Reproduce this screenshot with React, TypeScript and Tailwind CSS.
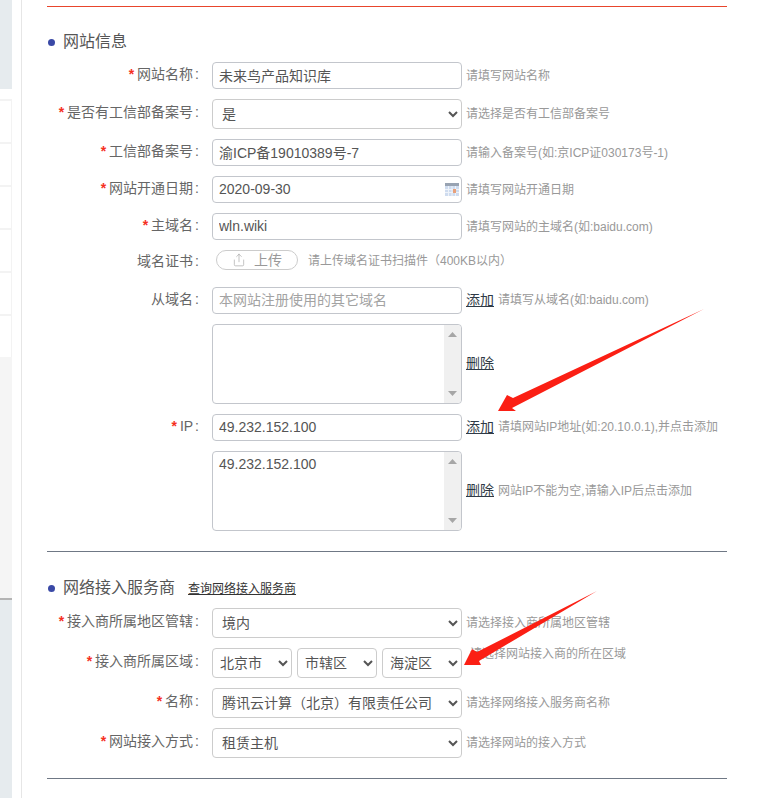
import React, { FC, ReactNode } from 'react'
import { Share } from 'lucide-react'

const FONT = '[font-family:"Liberation_Sans","Noto_Sans_CJK_SC",sans-serif]'

type RowProps = {
  label: string
  required?: boolean
  className?: string
  labelClass?: string
  children: ReactNode
}

// label column + control, label is right aligned and ends just before the control
const Row: FC<RowProps> = ({ label, required, className = '', labelClass = '-mt-[4px]', children }) => (
  <div className={`flex items-center ${className}`}>
    <label className={`w-[153px] shrink-0 text-right text-[14px] leading-5 text-[#666] ${labelClass}`}>
      {required && <span className="mr-[3px] font-bold text-[#f5301f]">*</span>}
      {label}
      <span className="ml-[2px] mr-px">:</span>
    </label>
    <div className="ml-3 flex items-center">{children}</div>
  </div>
)

const Hint: FC<{ children: ReactNode; className?: string }> = ({ children, className = '' }) => (
  <span className={`whitespace-nowrap text-[12px] leading-4 text-[#999] ${className}`}>{children}</span>
)

const LinkText: FC<{ children: ReactNode }> = ({ children }) => (
  <a className="ml-1 mr-1 -mt-[2px] cursor-pointer text-[14px] leading-5 text-[#2f3a46] underline">{children}</a>
)

const TextInput: FC<{ value?: string; placeholder?: string; children?: ReactNode }> = ({
  value,
  placeholder,
  children
}) => (
  <div className="relative h-[27px] w-[250px]">
    <input
      readOnly
      value={value}
      placeholder={placeholder}
      className="h-full w-full rounded border border-[#c3c6cc] bg-white px-[6px] pb-[2px] text-[14px] text-[#555] outline-none placeholder:text-[#a3a3a3]"
    />
    {children}
  </div>
)

const SelectBox: FC<{ value: string; width?: string; pad?: string }> = ({
  value,
  width = 'w-[250px]',
  pad = 'pl-[5px]'
}) => (
  <select
    defaultValue={value}
    className={`h-[30px] rounded border border-[#ccc] bg-white text-[14px] text-[#555] outline-none ${width} ${pad}`}
  >
    <option>{value}</option>
  </select>
)

const ScrollBox: FC<{ value?: string }> = ({ value }) => (
  <div className="relative h-20 w-[250px]">
    <textarea
      readOnly
      value={value ?? ''}
      className="h-full w-full resize-none overflow-hidden rounded border border-[#c3c6cc] bg-white px-[6px] py-[2px] text-[14px] leading-5 text-[#555] outline-none"
    />
    {/* scrollbar track */}
    <div className="absolute bottom-px right-px top-px flex w-[17px] flex-col items-center justify-between rounded-r bg-[#f0f0f0] py-[7px]">
      <svg width="9" height="5" viewBox="0 0 9 5">
        <path d="M4.5 0 9 5H0z" fill="#a6a6a6" />
      </svg>
      <svg width="9" height="5" viewBox="0 0 9 5">
        <path d="M0 0h9L4.5 5z" fill="#a6a6a6" />
      </svg>
    </div>
  </div>
)

const CalendarIcon: FC = () => (
  <svg className="absolute right-[3px] top-[7px]" width="14" height="13" viewBox="0 0 14 13">
    <rect x="0" y="0" width="14" height="13" fill="#cfdcef" />
    <rect x="0" y="0" width="14" height="3" fill="#98a3b2" />
    <path d="M3.5 3v10M7 3v10M10.5 3v10M0 6.5h14M0 9.5h14" stroke="#eef3fa" strokeWidth="1" />
    <rect x="8" y="6" width="3" height="4" fill="#e8a07a" />
  </svg>
)

const SectionTitle: FC<{ title: string; children?: ReactNode; className?: string }> = ({
  title,
  children,
  className = ''
}) => (
  <div className={`flex h-6 items-center ${className}`}>
    <span className="ml-px h-[7px] w-[7px] rounded-full bg-[#3a49a6]" />
    <h3 className="ml-2 text-[16px] leading-6 font-normal text-[#555]">{title}</h3>
    {children}
  </div>
)

const Sidebar: FC = () => (
  <aside className="flex h-full w-3 shrink-0 flex-col">
    <div className="h-[89px] bg-[#e6ebee]" />
    <div className="h-[10px]" />
    {[0, 1, 2, 3, 4, 5].map((i) => (
      <div key={i} className="h-[43px] border-t-2 border-r border-[#f3f3f3]" />
    ))}
    <div className="h-[241px] bg-[#f5f5f5]" />
    <div className="h-[2px] bg-[#b4b4b4]" />
    <div className="flex-1 bg-[#e6ebee]" />
  </aside>
)

const App: FC = () => (
  <div className={`relative flex h-[798px] w-[774px] overflow-hidden bg-white ${FONT}`}>
    <Sidebar />
    <div className="ml-[9px] h-full w-px bg-[#e6e6e6]" />

    <main className="ml-[25px] w-[680px] pt-[6px]">
      <div className="h-px bg-[#e8452c]" />

      <SectionTitle title="网站信息" className="mt-[23px]" />

      <Row label="网站名称" required className="mt-2">
        <TextInput value="未来鸟产品知识库" />
        <Hint className="ml-1">请填写网站名称</Hint>
      </Row>
      <Row label="是否有工信部备案号" required className="mt-[10px]">
        <SelectBox value="是" />
        <Hint className="ml-1">请选择是否有工信部备案号</Hint>
      </Row>
      <Row label="工信部备案号" required className="mt-[10px]">
        <TextInput value="渝ICP备19010389号-7" />
        <Hint className="ml-1">请输入备案号(如:京ICP证030173号-1)</Hint>
      </Row>
      <Row label="网站开通日期" required className="mt-[10px]">
        <TextInput value="2020-09-30">
          <CalendarIcon />
        </TextInput>
        <Hint className="ml-1">请填写网站开通日期</Hint>
      </Row>
      <Row label="主域名" required className="mt-[10px]">
        <TextInput value="wln.wiki" />
        <Hint className="ml-1">请填写网站的主域名(如:baidu.com)</Hint>
      </Row>
      <Row label="域名证书" labelClass="mt-[2px]" className="mt-[10px] h-5">
        <button className="ml-1 flex h-5 w-[82px] items-center justify-center rounded-full border border-[#ccc] text-[14px] text-[#999]">
          <Share size={14} strokeWidth={1} className="mr-2" />
          上传
        </button>
        <Hint className="ml-[10px] mt-[2px]">请上传域名证书扫描件（400KB以内）</Hint>
      </Row>
      <Row label="从域名" className="mt-[17px]">
        <TextInput placeholder="本网站注册使用的其它域名" />
        <LinkText>添加</LinkText>
        <Hint className="-mt-[2px]">请填写从域名(如:baidu.com)</Hint>
      </Row>
      <div className="mt-[10px] flex items-center pl-[165px]">
        <ScrollBox />
        <LinkText>删除</LinkText>
      </div>
      <Row label="IP" required className="mt-[10px]">
        <TextInput value="49.232.152.100" />
        <LinkText>添加</LinkText>
        <Hint className="-mt-[2px]">请填网站IP地址(如:20.10.0.1),并点击添加</Hint>
      </Row>
      <div className="mt-[10px] flex items-center pl-[165px]">
        <ScrollBox value="49.232.152.100" />
        <LinkText>删除</LinkText>
        <Hint>网站IP不能为空,请输入IP后点击添加</Hint>
      </div>

      <div className="mt-5 h-px bg-[#6f7885]" />

      <SectionTitle title="网络接入服务商" className="mt-6">
        <a className="ml-[13px] mt-[2px] cursor-pointer text-[12px] text-[#333] underline">查询网络接入服务商</a>
      </SectionTitle>

      <Row label="接入商所属地区管辖" required className="mt-2">
        <SelectBox value="境内" />
        <Hint className="ml-1">请选择接入商所属地区管辖</Hint>
      </Row>
      <Row label="接入商所属区域" required className="mt-[10px]">
        <div className="flex gap-[5px]">
          <SelectBox value="北京市" width="w-[80px]" pad="pl-[3px]" />
          <SelectBox value="市辖区" width="w-[80px]" pad="pl-[3px]" />
          <SelectBox value="海淀区" width="w-[80px]" pad="pl-[3px]" />
        </div>
        <Hint className="ml-2 -mt-[18px]">请选择网站接入商的所在区域</Hint>
      </Row>
      <Row label="名称" required className="mt-[10px]">
        <SelectBox value="腾讯云计算（北京）有限责任公司" />
        <Hint className="ml-1">请选择网络接入服务商名称</Hint>
      </Row>
      <Row label="网站接入方式" required className="mt-[10px]">
        <SelectBox value="租赁主机" />
        <Hint className="ml-1">请选择网站的接入方式</Hint>
      </Row>

      <div className="mt-5 h-px bg-[#6f7885]" />
    </main>

    {/* red annotation arrows drawn on top of the screenshot */}
    <svg className="pointer-events-none absolute left-0 top-0" width="774" height="798" viewBox="0 0 774 798">
      <polygon points="704,309 513,398 507,395 498,411 516,411 512,408" fill="#fb1f14" />
      <polygon points="597,591 477,652 472,649 464,665 481,665 479,661" fill="#fb1f14" />
    </svg>
  </div>
)

export default App
